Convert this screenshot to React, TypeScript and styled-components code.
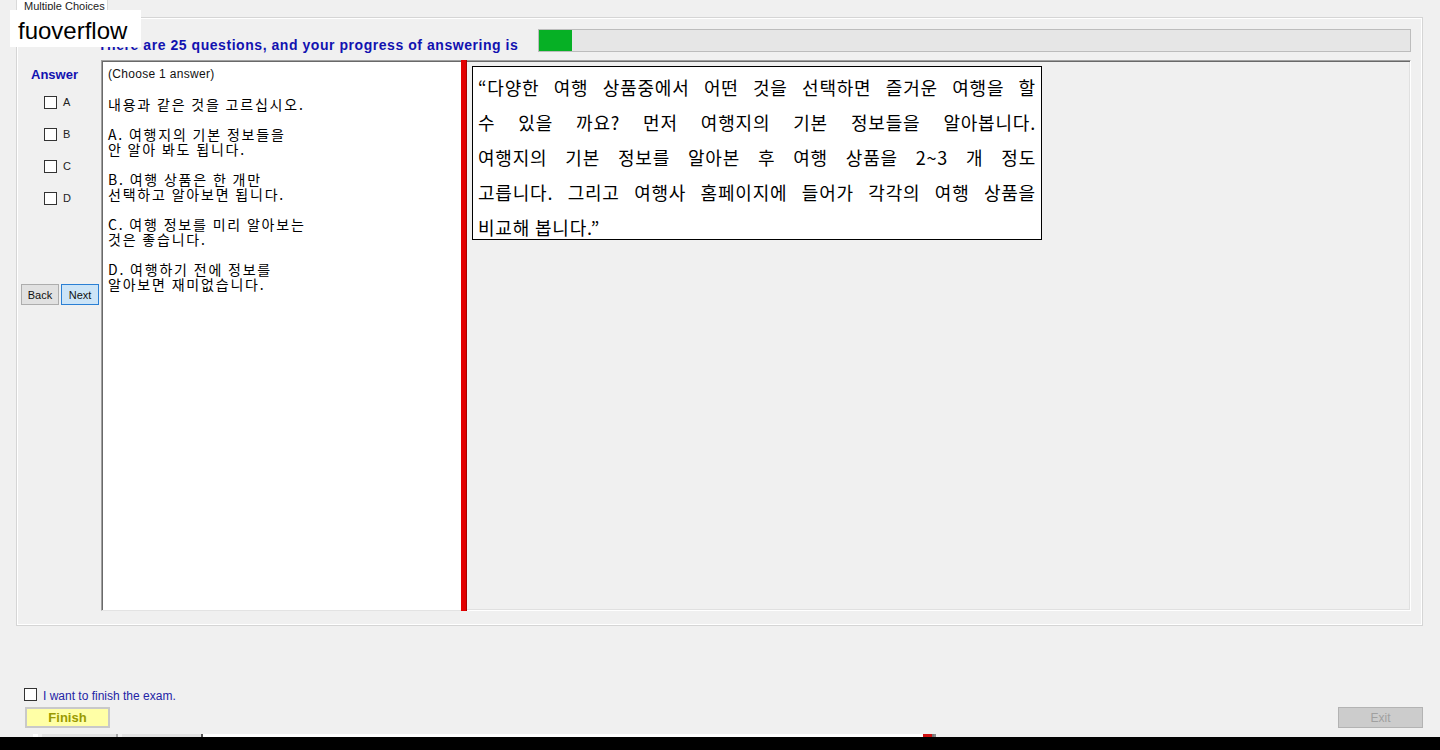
import React from 'react'
import styled, { createGlobalStyle } from 'styled-components'

const GlobalStyle = createGlobalStyle`
  html, body {
    margin: 0;
    padding: 0;
    background: #f0f0f0;
  }
  body {
    font-family: "Liberation Sans", Arial, sans-serif;
  }
`

const blue = '#1212b0'
const korean = `"Noto Sans CJK KR", "Noto Sans", sans-serif`

const Page = styled.div`
  position: relative;
  width: 1440px;
  height: 750px;
  overflow: hidden;
  display: flex;
  flex-direction: column;
  background: #f0f0f0;
`

const Watermark = styled.div`
  position: absolute;
  left: 10px;
  top: 10px;
  width: 131px;
  height: 37px;
  box-sizing: border-box;
  padding: 6px 0 0 8px;
  background: #fff;
  color: #000;
  font-size: 24px;
  line-height: 30px;
`

const TabRow = styled.div`
  height: 17px;
  padding-left: 16px;
  box-sizing: border-box;
`

const Tab = styled.div`
  width: 92px;
  height: 13px;
  box-sizing: border-box;
  padding: 1px 0 0 7px;
  background: #fff;
  border: 1px solid #d9d9d9;
  border-top: none;
  color: #222;
  font-size: 11px;
  line-height: 11px;
  overflow: hidden;
  white-space: nowrap;
`

const GroupBox = styled.div`
  margin-left: 16px;
  width: 1407px;
  height: 609px;
  box-sizing: border-box;
  border: 1px solid #d5d5d5;
  box-shadow: inset 1px 1px 0 #fff, inset -1px -1px 0 #fff;
  padding: 11px 11px 0 3px;
  display: flex;
  flex-direction: column;
`

const HeaderRow = styled.div`
  display: flex;
  height: 23px;
  padding-left: 78px;
`

const HeaderText = styled.div`
  align-self: flex-end;
  margin-bottom: -1px;
  color: ${blue};
  font-size: 14px;
  font-weight: bold;
  letter-spacing: 0.55px;
  line-height: 16px;
  white-space: nowrap;
`

const ProgressBar = styled.div`
  margin-left: auto;
  width: 873px;
  height: 23px;
  box-sizing: border-box;
  border: 1px solid #bcbcbc;
  background: #e6e6e6;
`

const ProgressFill = styled.div`
  height: 100%;
  background: #06b025;
`

const MainRow = styled.div`
  display: flex;
  height: 551px;
  margin-top: 8px;
`

const AnswerColumn = styled.div`
  width: 81px;
  flex-shrink: 0;
  box-sizing: border-box;
  padding: 7px 0 0 1px;
  display: flex;
  flex-direction: column;
`

const AnswerLabel = styled.div`
  padding-left: 10px;
  color: ${blue};
  font-size: 13px;
  font-weight: bold;
  line-height: 16px;
`

const ChoiceList = styled.div`
  margin-top: 3px;
  display: flex;
  flex-direction: column;
`

const ChoiceRow = styled.label`
  height: 32px;
  display: flex;
  align-items: center;
  gap: 6px;
  padding-left: 23px;
  color: #222;
  font-size: 11px;
`

const CheckBox = styled.span`
  width: 13px;
  height: 13px;
  box-sizing: border-box;
  border: 1px solid #333;
  background: #fff;
  flex-shrink: 0;
`

const NavRow = styled.div`
  margin-top: 70px;
  display: flex;
  gap: 2px;
`

const NavButton = styled.button<{ $active?: boolean }>`
  width: 38px;
  height: 21px;
  padding: 0;
  box-sizing: border-box;
  border: 1px solid ${(p) => (p.$active ? '#2a7fd4' : '#adadad')};
  background: ${(p) => (p.$active ? '#cce4f7' : '#e1e1e1')};
  color: #111;
  font-family: "Liberation Sans", Arial, sans-serif;
  font-size: 11px;
`

const QuestionBox = styled.div`
  width: 360px;
  flex-shrink: 0;
  box-sizing: border-box;
  background: #fff;
  border-top: 1px solid #a0a0a0;
  border-left: 1px solid #a0a0a0;
  border-bottom: 1px solid #e3e3e3;
  box-shadow: inset 1px 1px 0 #696969;
  padding: 5px 6px;
  color: #000;
`

const Instruction = styled.div`
  font-size: 12px;
  letter-spacing: 0.3px;
  line-height: 16px;
  color: #111;
`

const QuestionPara = styled.div`
  margin-top: 15px;
  font-family: ${korean};
  font-size: 14px;
  letter-spacing: 1.8px;
  line-height: 15px;
  white-space: pre-line;
`

const Splitter = styled.div`
  width: 5px;
  flex-shrink: 0;
  background: #e20000;
  border-right: 1px solid #a80000;
`

const PassagePanel = styled.div`
  flex: 1;
  box-sizing: border-box;
  border-top: 1px solid #a0a0a0;
  border-right: 1px solid #fff;
  border-bottom: 1px solid #fff;
  box-shadow: inset 0 1px 0 #696969, inset -1px -1px 0 #e0e0e0;
  padding: 5px 5px;
`

const Passage = styled.div`
  width: 570px;
  height: 174px;
  box-sizing: border-box;
  border: 1px solid #000;
  background: #fff;
  padding: 3px 5px 0;
  font-family: ${korean};
  font-size: 18px;
  letter-spacing: 0.8px;
  line-height: 35px;
  color: #000;
`

const PassageLine = styled.div<{ $last?: boolean }>`
  text-align: justify;
  text-align-last: ${(p) => (p.$last ? 'left' : 'justify')};
  text-justify: inter-word;
  white-space: nowrap;
`

const FinishCheckRow = styled.label`
  margin-top: 62px;
  height: 13px;
  display: flex;
  align-items: center;
  gap: 6px;
  padding-left: 24px;
  color: #2424a6;
  font-size: 12px;
`

const FinishCheckText = styled.span`
  padding-top: 3px;
`

const ActionRow = styled.div`
  margin-top: 6px;
  display: flex;
  justify-content: space-between;
  padding: 0 17px 0 25px;
`

const FinishButton = styled.button`
  width: 85px;
  height: 21px;
  padding: 0;
  box-sizing: border-box;
  border: 2px solid #c9c9c9;
  background: #ffffa6;
  color: #9a9a00;
  font-family: "Liberation Sans", Arial, sans-serif;
  font-size: 13px;
  font-weight: bold;
`

const ExitButton = styled.button`
  width: 85px;
  height: 21px;
  padding: 0;
  box-sizing: border-box;
  border: 1px solid #b3b3b3;
  background: #cccccc;
  color: #a0a0a0;
  font-family: "Liberation Sans", Arial, sans-serif;
  font-size: 12px;
`

const Footer = styled.div`
  margin-top: auto;
  display: flex;
  flex-direction: column;
`

const TaskStrip = styled.div`
  height: 3px;
  display: flex;
`

const Segment = styled.span<{ $w: number; $color: string; $edge?: string }>`
  width: ${(p) => p.$w}px;
  height: 100%;
  box-sizing: border-box;
  background: ${(p) => p.$color};
  border-right: ${(p) => (p.$edge ? `2px solid ${p.$edge}` : 'none')};
`

const BlackBar = styled.div`
  height: 13px;
  background: #000;
`

const segments = [
  { w: 33, color: '#f0f0f0' },
  { w: 5, color: '#fff' },
  { w: 4, color: '#f0f0f0' },
  { w: 76, color: '#e2e2e2', edge: '#a8a8a8' },
  { w: 4, color: '#f0f0f0' },
  { w: 81, color: '#e2e2e2', edge: '#555' },
  { w: 720, color: '#fff' },
  { w: 11, color: '#d01010', edge: '#777' },
  { w: 2, color: '#888' },
]

const choices = ['A', 'B', 'C', 'D']

const questionParas = [
  '내용과 같은 것을 고르십시오.',
  'A.  여행지의 기본 정보들을\n안 알아 봐도 됩니다.',
  'B.  여행 상품은 한 개만\n선택하고 알아보면 됩니다.',
  'C.  여행 정보를 미리 알아보는\n것은 좋습니다.',
  'D.  여행하기 전에 정보를\n알아보면 재미없습니다.',
]

const passageLines = [
  '“다양한 여행 상품중에서 어떤 것을 선택하면 즐거운 여행을 할',
  '수 있을 까요? 먼저 여행지의 기본 정보들을 알아봅니다.',
  '여행지의 기본 정보를 알아본 후 여행 상품을 2~3 개 정도',
  '고릅니다. 그리고 여행사 홈페이지에 들어가 각각의 여행 상품을',
  '비교해 봅니다.”',
]

export default function App() {
  const answered = 1
  const total = 25

  return (
    <Page>
      <GlobalStyle />
      <TabRow>
        <Tab>Multiple Choices</Tab>
      </TabRow>
      <GroupBox>
        <HeaderRow>
          <HeaderText>There are {total} questions, and your progress of answering is</HeaderText>
          <ProgressBar>
            <ProgressFill style={{ width: `${(answered / total) * 100 - 0.25}%` }} />
          </ProgressBar>
        </HeaderRow>
        <MainRow>
          <AnswerColumn>
            <AnswerLabel>Answer</AnswerLabel>
            <ChoiceList>
              {choices.map((c) => (
                <ChoiceRow key={c}>
                  <CheckBox />
                  {c}
                </ChoiceRow>
              ))}
            </ChoiceList>
            <NavRow>
              <NavButton>Back</NavButton>
              <NavButton $active>Next</NavButton>
            </NavRow>
          </AnswerColumn>
          <QuestionBox>
            <Instruction>(Choose 1 answer)</Instruction>
            {questionParas.map((p, i) => (
              <QuestionPara key={i}>{p}</QuestionPara>
            ))}
          </QuestionBox>
          <Splitter />
          <PassagePanel>
            <Passage>
              {passageLines.map((line, i) => (
                <PassageLine key={i} $last={i === passageLines.length - 1}>
                  {line}
                </PassageLine>
              ))}
            </Passage>
          </PassagePanel>
        </MainRow>
      </GroupBox>
      <FinishCheckRow>
        <CheckBox />
        <FinishCheckText>I want to finish the exam.</FinishCheckText>
      </FinishCheckRow>
      <ActionRow>
        <FinishButton>Finish</FinishButton>
        <ExitButton disabled>Exit</ExitButton>
      </ActionRow>
      <Footer>
        <TaskStrip>
          {segments.map((s, i) => (
            <Segment key={i} $w={s.w} $color={s.color} $edge={s.edge} />
          ))}
        </TaskStrip>
        <BlackBar />
      </Footer>
      <Watermark>fuoverflow</Watermark>
    </Page>
  )
}
